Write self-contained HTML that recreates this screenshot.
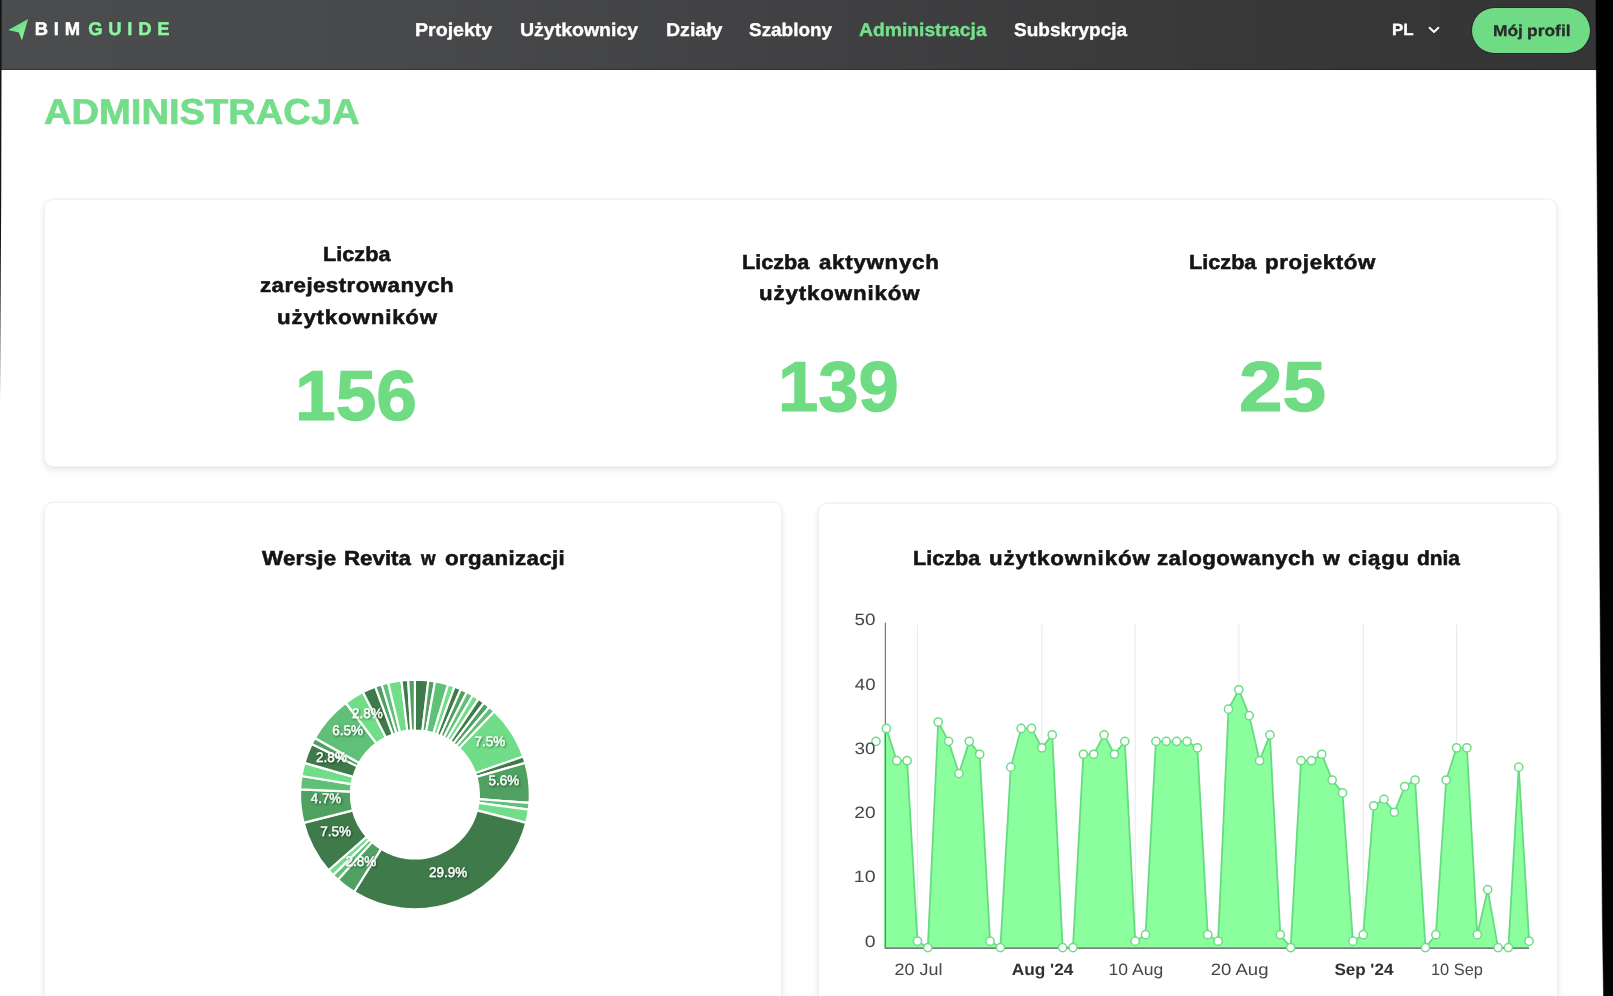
<!DOCTYPE html>
<html lang="pl"><head><meta charset="utf-8"><title>BIMGUIDE – Administracja</title>
<style>
*{box-sizing:border-box;margin:0;padding:0}
html,body{width:1613px;height:996px;overflow:hidden;background:#fff}
body{font-family:"Liberation Sans",sans-serif;font-weight:bold;position:relative;text-rendering:geometricPrecision}
#app{position:absolute;left:0;top:0;width:1613px;height:996px;overflow:hidden;filter:blur(0.5px)}
.t{position:absolute;white-space:pre;line-height:1;transform-origin:0 0;display:block}
#hbg{position:absolute;left:0;top:0;width:1613px;height:69.8px;box-shadow:inset 0 -1px 0 rgba(0,0,0,.28);background:linear-gradient(90deg,#4b4c4e 0%,#48494b 25%,#3f3f41 55%,#373737 80%,#353535 100%);filter:blur(0.5px)}
header{position:absolute;left:0;top:0;width:1613px;height:69.8px}
.btn{position:absolute;left:1472.2px;top:7.8px;width:117.8px;height:45.2px;border-radius:23px;background:#6fdc85;box-shadow:0 0 0 1px rgba(42,34,48,.85)}
.card{position:absolute;background:#fff;border:1px solid #f0f1f4;border-radius:9px;box-shadow:0 3px 7px -1px rgba(60,70,100,.16),0 0 3px rgba(60,70,100,.05)}
.card svg{position:absolute;left:-1px;top:-1px;overflow:visible}
.card .t{margin:-1px 0 0 -1px}
.bezel{position:absolute;left:0;top:0;width:1613px;height:996px;pointer-events:none}
</style></head><body><div id="hbg"></div><div id="app">
<header>
<svg width="40" height="60" style="position:absolute;left:0;top:0" viewBox="0 0 40 60"><defs><linearGradient id="lg" x1="0.2" y1="0" x2="0.8" y2="1"><stop offset="0" stop-color="#62d27c"/><stop offset="1" stop-color="#8df7a2"/></linearGradient></defs><path d="M28.1 19L8.2 29.9L18.9 32.5L21.9 40.5Z" fill="url(#lg)"/></svg>
<span class="t" style="left:34.79px;top:20.25px;font-size:18.40px;color:#fff;transform:scaleX(1.0000);letter-spacing:5.742px;-webkit-text-stroke:0.45px #fff;">BIM</span>
<span class="t" style="left:88.27px;top:20.25px;font-size:18.40px;color:#8cf5a0;transform:scaleX(1.0000);letter-spacing:5.738px;-webkit-text-stroke:0.45px #8cf5a0;">GUIDE</span>
<nav><span class="t" style="left:415.27px;top:21.25px;font-size:18.50px;color:#fff;transform:scaleX(1.0583);-webkit-text-stroke:0.35px #fff;">Projekty</span><span class="t" style="left:520.00px;top:21.25px;font-size:18.50px;color:#fff;transform:scaleX(1.0542);-webkit-text-stroke:0.35px #fff;">Użytkownicy</span><span class="t" style="left:665.67px;top:21.25px;font-size:18.50px;color:#fff;transform:scaleX(1.0560);-webkit-text-stroke:0.35px #fff;">Działy</span><span class="t" style="left:748.73px;top:21.25px;font-size:18.50px;color:#fff;transform:scaleX(1.0233);-webkit-text-stroke:0.35px #fff;">Szablony</span><span class="t" style="left:859.09px;top:21.25px;font-size:18.50px;color:#74e08b;transform:scaleX(1.0430);-webkit-text-stroke:0.35px #74e08b;">Administracja</span><span class="t" style="left:1014.03px;top:21.25px;font-size:18.50px;color:#fff;transform:scaleX(1.0287);-webkit-text-stroke:0.35px #fff;">Subskrypcja</span></nav>
<span class="t" style="left:1391.74px;top:22.25px;font-size:16.20px;color:#fff;transform:scaleX(1.0435);-webkit-text-stroke:0.35px #fff;">PL</span>
<svg width="14" height="10" viewBox="0 0 14 10" style="position:absolute;left:1426.6px;top:25.4px"><path d="M2.6 2.7L7 7L11.4 2.7" fill="none" stroke="#fff" stroke-width="1.9" stroke-linecap="round" stroke-linejoin="round"/></svg>
<div class="btn"><span class="t" style="left:20.39px;top:16.45px;font-size:15.80px;color:#2a2a2c;transform:scaleX(1.1015);word-spacing:-0.641px;-webkit-text-stroke:0.3px #2a2a2c;">Mój profil</span></div>
</header>
<h1><span class="t" style="left:44.20px;top:94.25px;font-size:36.00px;color:#74dd89;transform:scaleX(1.0592);-webkit-text-stroke:0.7px #74dd89;">ADMINISTRACJA</span></h1>
<section class="card" style="left:43.8px;top:199.0px;width:1513.2px;height:268.3px">
<span class="t" style="left:279.22px;top:46.25px;font-size:20.30px;color:#141414;transform:scaleX(1.0696);-webkit-text-stroke:0.55px #141414;">Liczba</span> <span class="t" style="left:216.48px;top:77.25px;font-size:20.30px;color:#141414;transform:scaleX(1.1000);letter-spacing:0.395px;-webkit-text-stroke:0.55px #141414;">zarejestrowanych</span> <span class="t" style="left:233.09px;top:109.25px;font-size:20.30px;color:#141414;transform:scaleX(1.1000);letter-spacing:0.738px;-webkit-text-stroke:0.55px #141414;">użytkowników</span> <span class="t" style="left:698.43px;top:54.25px;font-size:20.30px;color:#141414;transform:scaleX(1.0663);-webkit-text-stroke:0.55px #141414;">Liczba</span> <span class="t" style="left:774.82px;top:54.25px;font-size:20.30px;color:#141414;transform:scaleX(1.1000);letter-spacing:0.649px;-webkit-text-stroke:0.55px #141414;">aktywnych</span> <span class="t" style="left:715.69px;top:85.25px;font-size:20.30px;color:#141414;transform:scaleX(1.1000);letter-spacing:0.771px;-webkit-text-stroke:0.55px #141414;">użytkowników</span> <span class="t" style="left:1145.02px;top:54.25px;font-size:20.30px;color:#141414;transform:scaleX(1.0680);-webkit-text-stroke:0.55px #141414;">Liczba</span> <span class="t" style="left:1221.00px;top:54.25px;font-size:20.30px;color:#141414;transform:scaleX(1.1000);letter-spacing:0.571px;-webkit-text-stroke:0.55px #141414;">projektów</span> <span class="t num" style="left:251.10px;top:163.25px;font-size:70.80px;color:#6fdc84;transform:scaleX(1.0323);-webkit-text-stroke:1.2px #6fdc84;">156</span> <span class="t num" style="left:734.34px;top:154.25px;font-size:70.80px;color:#6fdc84;transform:scaleX(1.0230);-webkit-text-stroke:1.2px #6fdc84;">139</span> <span class="t num" style="left:1195.18px;top:154.25px;font-size:70.80px;color:#6fdc84;transform:scaleX(1.1073);-webkit-text-stroke:1.2px #6fdc84;">25</span>
</section>
<section class="card" style="left:44.0px;top:502.2px;width:738.4px;height:520px">
<h2><span class="t" style="left:218.30px;top:47.05px;font-size:20.30px;color:#141414;transform:scaleX(1.1000);letter-spacing:0.248px;-webkit-text-stroke:0.55px #141414;">Wersje</span> <span class="t" style="left:300.08px;top:47.05px;font-size:20.30px;color:#141414;transform:scaleX(1.0997);-webkit-text-stroke:0.55px #141414;">Revita</span> <span class="t" style="left:377.13px;top:47.05px;font-size:20.30px;color:#141414;transform:scaleX(0.9220);-webkit-text-stroke:0.55px #141414;">w</span> <span class="t" style="left:401.20px;top:47.05px;font-size:20.30px;color:#141414;transform:scaleX(1.1000);letter-spacing:0.287px;-webkit-text-stroke:0.55px #141414;">organizacji</span></h2>
<svg width="738.4" height="520">
<defs><filter id="ds" x="-20%" y="-20%" width="150%" height="150%"><feDropShadow dx="1" dy="1" stdDeviation="0.8" flood-color="#000" flood-opacity="0.5"/></filter></defs>
<g stroke="#fff" stroke-width="2.2" stroke-linejoin="round">
<path d="M370.90 177.60A114.9 114.9 0 0 1 384.36 178.39L378.40 228.94A64.0 64.0 0 0 0 370.90 228.50Z" fill="#3e7a4a"/>
<path d="M384.36 178.39A114.9 114.9 0 0 1 391.04 179.38L382.12 229.49A64.0 64.0 0 0 0 378.40 228.94Z" fill="#4fa061"/>
<path d="M391.04 179.38A114.9 114.9 0 0 1 404.15 182.52L389.42 231.24A64.0 64.0 0 0 0 382.12 229.49Z" fill="#61c077"/>
<path d="M404.15 182.52A114.9 114.9 0 0 1 410.55 184.66L392.99 232.43A64.0 64.0 0 0 0 389.42 231.24Z" fill="#71dd89"/>
<path d="M410.55 184.66A114.9 114.9 0 0 1 416.81 187.17L396.47 233.83A64.0 64.0 0 0 0 392.99 232.43Z" fill="#3e7a4a"/>
<path d="M416.81 187.17A114.9 114.9 0 0 1 422.91 190.05L399.87 235.43A64.0 64.0 0 0 0 396.47 233.83Z" fill="#4fa061"/>
<path d="M422.91 190.05A114.9 114.9 0 0 1 428.84 193.28L403.17 237.23A64.0 64.0 0 0 0 399.87 235.43Z" fill="#61c077"/>
<path d="M428.84 193.28A114.9 114.9 0 0 1 434.56 196.85L406.36 239.22A64.0 64.0 0 0 0 403.17 237.23Z" fill="#71dd89"/>
<path d="M434.56 196.85A114.9 114.9 0 0 1 440.06 200.75L409.42 241.39A64.0 64.0 0 0 0 406.36 239.22Z" fill="#3e7a4a"/>
<path d="M440.06 200.75A114.9 114.9 0 0 1 445.33 204.97L412.36 243.74A64.0 64.0 0 0 0 409.42 241.39Z" fill="#4fa061"/>
<path d="M445.33 204.97A114.9 114.9 0 0 1 450.34 209.48L415.15 246.26A64.0 64.0 0 0 0 412.36 243.74Z" fill="#61c077"/>
<path d="M450.34 209.48A114.9 114.9 0 0 1 479.31 254.44L431.29 271.30A64.0 64.0 0 0 0 415.15 246.26Z" fill="#71dd89"/>
<path d="M479.31 254.44A114.9 114.9 0 0 1 481.36 260.87L432.43 274.88A64.0 64.0 0 0 0 431.29 271.30Z" fill="#3e7a4a"/>
<path d="M481.36 260.87A114.9 114.9 0 0 1 485.49 300.93L434.73 297.19A64.0 64.0 0 0 0 432.43 274.88Z" fill="#4fa061"/>
<path d="M485.49 300.93A114.9 114.9 0 0 1 484.80 307.64L434.34 300.93A64.0 64.0 0 0 0 434.73 297.19Z" fill="#61c077"/>
<path d="M484.80 307.64A114.9 114.9 0 0 1 482.24 320.88L432.92 308.31A64.0 64.0 0 0 0 434.34 300.93Z" fill="#71dd89"/>
<path d="M482.24 320.88A114.9 114.9 0 0 1 310.08 389.98L337.02 346.80A64.0 64.0 0 0 0 432.92 308.31Z" fill="#3e7a4a"/>
<path d="M310.08 389.98A114.9 114.9 0 0 1 293.93 377.81L328.03 340.02A64.0 64.0 0 0 0 337.02 346.80Z" fill="#4fa061"/>
<path d="M293.93 377.81A114.9 114.9 0 0 1 289.06 373.15L325.31 337.42A64.0 64.0 0 0 0 328.03 340.02Z" fill="#61c077"/>
<path d="M289.06 373.15A114.9 114.9 0 0 1 284.47 368.21L322.76 334.67A64.0 64.0 0 0 0 325.31 337.42Z" fill="#71dd89"/>
<path d="M284.47 368.21A114.9 114.9 0 0 1 259.56 320.88L308.88 308.31A64.0 64.0 0 0 0 322.76 334.67Z" fill="#3e7a4a"/>
<path d="M259.56 320.88A114.9 114.9 0 0 1 256.11 287.44L306.96 289.68A64.0 64.0 0 0 0 308.88 308.31Z" fill="#4fa061"/>
<path d="M256.11 287.44A114.9 114.9 0 0 1 257.49 274.03L307.73 282.21A64.0 64.0 0 0 0 306.96 289.68Z" fill="#61c077"/>
<path d="M257.49 274.03A114.9 114.9 0 0 1 260.44 260.87L309.37 274.88A64.0 64.0 0 0 0 307.73 282.21Z" fill="#71dd89"/>
<path d="M260.44 260.87A114.9 114.9 0 0 1 267.69 242.00L313.41 264.37A64.0 64.0 0 0 0 309.37 274.88Z" fill="#3e7a4a"/>
<path d="M267.69 242.00A114.9 114.9 0 0 1 270.84 236.03L315.16 261.04A64.0 64.0 0 0 0 313.41 264.37Z" fill="#4fa061"/>
<path d="M270.84 236.03A114.9 114.9 0 0 1 301.74 200.75L332.38 241.39A64.0 64.0 0 0 0 315.16 261.04Z" fill="#61c077"/>
<path d="M301.74 200.75A114.9 114.9 0 0 1 318.89 190.05L341.93 235.43A64.0 64.0 0 0 0 332.38 241.39Z" fill="#71dd89"/>
<path d="M318.89 190.05A114.9 114.9 0 0 1 331.25 184.66L348.81 232.43A64.0 64.0 0 0 0 341.93 235.43Z" fill="#3e7a4a"/>
<path d="M331.25 184.66A114.9 114.9 0 0 1 337.65 182.52L352.38 231.24A64.0 64.0 0 0 0 348.81 232.43Z" fill="#4fa061"/>
<path d="M337.65 182.52A114.9 114.9 0 0 1 344.16 180.76L356.01 230.26A64.0 64.0 0 0 0 352.38 231.24Z" fill="#61c077"/>
<path d="M344.16 180.76A114.9 114.9 0 0 1 357.44 178.39L363.40 228.94A64.0 64.0 0 0 0 356.01 230.26Z" fill="#71dd89"/>
<path d="M357.44 178.39A114.9 114.9 0 0 1 364.16 177.80L367.14 228.61A64.0 64.0 0 0 0 363.40 228.94Z" fill="#3e7a4a"/>
<path d="M364.16 177.80A114.9 114.9 0 0 1 370.90 177.60L370.90 228.50A64.0 64.0 0 0 0 367.14 228.61Z" fill="#4fa061"/>
</g><g filter="url(#ds)" stroke="#fff" stroke-width="0.35">
<text transform="translate(430.59,243.80) scale(0.9713,1)" font-size="13.90" font-weight="normal" fill="#fff">7.5%</text>
<text transform="translate(444.54,282.80) scale(0.9664,1)" font-size="13.90" font-weight="normal" fill="#fff">5.6%</text>
<text transform="translate(385.09,374.80) scale(0.9655,1)" font-size="13.90" font-weight="normal" fill="#fff">29.9%</text>
<text transform="translate(301.58,363.80) scale(0.9709,1)" font-size="13.90" font-weight="normal" fill="#fff">2.8%</text>
<text transform="translate(276.25,333.80) scale(0.9713,1)" font-size="13.90" font-weight="normal" fill="#fff">7.5%</text>
<text transform="translate(266.82,300.80) scale(0.9589,1)" font-size="13.90" font-weight="normal" fill="#fff">4.7%</text>
<text transform="translate(271.93,259.80) scale(0.9709,1)" font-size="13.90" font-weight="normal" fill="#fff">2.8%</text>
<text transform="translate(288.13,232.80) scale(0.9711,1)" font-size="13.90" font-weight="normal" fill="#fff">6.5%</text>
<text transform="translate(308.07,215.80) scale(0.9709,1)" font-size="13.90" font-weight="normal" fill="#fff">2.8%</text>
</g></svg></section>
<section class="card" style="left:818.0px;top:502.6px;width:740.0px;height:520px">
<h2><span class="t" style="left:95.23px;top:46.65px;font-size:20.30px;color:#141414;transform:scaleX(1.0663);-webkit-text-stroke:0.55px #141414;">Liczba</span> <span class="t" style="left:170.79px;top:46.65px;font-size:20.30px;color:#141414;transform:scaleX(1.1000);letter-spacing:0.788px;-webkit-text-stroke:0.55px #141414;">użytkowników</span> <span class="t" style="left:339.28px;top:46.65px;font-size:20.30px;color:#141414;transform:scaleX(1.1000);letter-spacing:0.423px;-webkit-text-stroke:0.55px #141414;">zalogowanych</span> <span class="t" style="left:504.94px;top:46.65px;font-size:20.30px;color:#141414;transform:scaleX(1.0668);-webkit-text-stroke:0.55px #141414;">w</span> <span class="t" style="left:529.80px;top:46.65px;font-size:20.30px;color:#141414;transform:scaleX(1.1000);letter-spacing:0.675px;-webkit-text-stroke:0.55px #141414;">ciągu</span> <span class="t" style="left:598.72px;top:46.65px;font-size:20.30px;color:#141414;transform:scaleX(1.0298);-webkit-text-stroke:0.55px #141414;">dnia</span></h2>
<svg width="740.0" height="520">
<defs><clipPath id="cp"><rect x="66.00" y="97.40" width="700" height="347.40"/></clipPath></defs>
<line x1="99.47" y1="121.40" x2="99.47" y2="444.60" stroke="#e9eaec" stroke-width="1.1"/>
<line x1="223.87" y1="121.40" x2="223.87" y2="444.60" stroke="#e9eaec" stroke-width="1.1"/>
<line x1="317.17" y1="121.40" x2="317.17" y2="444.60" stroke="#e9eaec" stroke-width="1.1"/>
<line x1="420.85" y1="121.40" x2="420.85" y2="444.60" stroke="#e9eaec" stroke-width="1.1"/>
<line x1="545.25" y1="121.40" x2="545.25" y2="444.60" stroke="#e9eaec" stroke-width="1.1"/>
<line x1="638.55" y1="121.40" x2="638.55" y2="444.60" stroke="#e9eaec" stroke-width="1.1"/>
<g clip-path="url(#cp)"><path d="M58.00 444.60L58.00 238.36L68.37 225.47L78.73 257.70L89.10 257.70L99.47 438.15L109.84 444.60L120.20 219.02L130.57 238.36L140.94 270.59L151.30 238.36L161.67 251.25L172.04 438.15L182.40 444.60L192.77 264.14L203.14 225.47L213.51 225.47L223.87 244.80L234.24 231.92L244.61 444.60L254.97 444.60L265.34 251.25L275.71 251.25L286.07 231.92L296.44 251.25L306.81 238.36L317.17 438.15L327.54 431.71L337.91 238.36L348.28 238.36L358.64 238.36L369.01 238.36L379.38 244.80L389.74 431.71L400.11 438.15L410.48 206.13L420.85 186.80L431.21 212.58L441.58 257.70L451.95 231.92L462.31 431.71L472.68 444.60L483.05 257.70L493.41 257.70L503.78 251.25L514.15 277.03L524.52 289.92L534.88 438.15L545.25 431.71L555.62 302.81L565.98 296.37L576.35 309.25L586.72 283.48L597.08 277.03L607.45 444.60L617.82 431.71L628.18 277.03L638.55 244.80L648.92 244.80L659.29 431.71L669.65 386.60L680.02 444.60L690.39 444.60L700.75 264.14L711.12 438.15L711.12 444.60Z" fill="#8bfe9e"/><path d="M58.00 238.36L68.37 225.47L78.73 257.70L89.10 257.70L99.47 438.15L109.84 444.60L120.20 219.02L130.57 238.36L140.94 270.59L151.30 238.36L161.67 251.25L172.04 438.15L182.40 444.60L192.77 264.14L203.14 225.47L213.51 225.47L223.87 244.80L234.24 231.92L244.61 444.60L254.97 444.60L265.34 251.25L275.71 251.25L286.07 231.92L296.44 251.25L306.81 238.36L317.17 438.15L327.54 431.71L337.91 238.36L348.28 238.36L358.64 238.36L369.01 238.36L379.38 244.80L389.74 431.71L400.11 438.15L410.48 206.13L420.85 186.80L431.21 212.58L441.58 257.70L451.95 231.92L462.31 431.71L472.68 444.60L483.05 257.70L493.41 257.70L503.78 251.25L514.15 277.03L524.52 289.92L534.88 438.15L545.25 431.71L555.62 302.81L565.98 296.37L576.35 309.25L586.72 283.48L597.08 277.03L607.45 444.60L617.82 431.71L628.18 277.03L638.55 244.80L648.92 244.80L659.29 431.71L669.65 386.60L680.02 444.60L690.39 444.60L700.75 264.14L711.12 438.15" fill="none" stroke="#66db80" stroke-width="1.8" stroke-linejoin="round"/></g>
<line x1="67.40" y1="119.70" x2="67.40" y2="445.50" stroke="#76787b" stroke-width="1.25"/>
<line x1="66.70" y1="445.10" x2="711.12" y2="445.10" stroke="#7a7c80" stroke-width="1.6"/>
<g fill="#fff" stroke="#6ddc85" stroke-width="1.5">
<circle cx="58.00" cy="238.36" r="4.1"/>
<circle cx="68.37" cy="225.47" r="4.1"/>
<circle cx="78.73" cy="257.70" r="4.1"/>
<circle cx="89.10" cy="257.70" r="4.1"/>
<circle cx="99.47" cy="438.15" r="4.1"/>
<circle cx="109.84" cy="444.60" r="4.1"/>
<circle cx="120.20" cy="219.02" r="4.1"/>
<circle cx="130.57" cy="238.36" r="4.1"/>
<circle cx="140.94" cy="270.59" r="4.1"/>
<circle cx="151.30" cy="238.36" r="4.1"/>
<circle cx="161.67" cy="251.25" r="4.1"/>
<circle cx="172.04" cy="438.15" r="4.1"/>
<circle cx="182.40" cy="444.60" r="4.1"/>
<circle cx="192.77" cy="264.14" r="4.1"/>
<circle cx="203.14" cy="225.47" r="4.1"/>
<circle cx="213.51" cy="225.47" r="4.1"/>
<circle cx="223.87" cy="244.80" r="4.1"/>
<circle cx="234.24" cy="231.92" r="4.1"/>
<circle cx="244.61" cy="444.60" r="4.1"/>
<circle cx="254.97" cy="444.60" r="4.1"/>
<circle cx="265.34" cy="251.25" r="4.1"/>
<circle cx="275.71" cy="251.25" r="4.1"/>
<circle cx="286.07" cy="231.92" r="4.1"/>
<circle cx="296.44" cy="251.25" r="4.1"/>
<circle cx="306.81" cy="238.36" r="4.1"/>
<circle cx="317.17" cy="438.15" r="4.1"/>
<circle cx="327.54" cy="431.71" r="4.1"/>
<circle cx="337.91" cy="238.36" r="4.1"/>
<circle cx="348.28" cy="238.36" r="4.1"/>
<circle cx="358.64" cy="238.36" r="4.1"/>
<circle cx="369.01" cy="238.36" r="4.1"/>
<circle cx="379.38" cy="244.80" r="4.1"/>
<circle cx="389.74" cy="431.71" r="4.1"/>
<circle cx="400.11" cy="438.15" r="4.1"/>
<circle cx="410.48" cy="206.13" r="4.1"/>
<circle cx="420.85" cy="186.80" r="4.1"/>
<circle cx="431.21" cy="212.58" r="4.1"/>
<circle cx="441.58" cy="257.70" r="4.1"/>
<circle cx="451.95" cy="231.92" r="4.1"/>
<circle cx="462.31" cy="431.71" r="4.1"/>
<circle cx="472.68" cy="444.60" r="4.1"/>
<circle cx="483.05" cy="257.70" r="4.1"/>
<circle cx="493.41" cy="257.70" r="4.1"/>
<circle cx="503.78" cy="251.25" r="4.1"/>
<circle cx="514.15" cy="277.03" r="4.1"/>
<circle cx="524.52" cy="289.92" r="4.1"/>
<circle cx="534.88" cy="438.15" r="4.1"/>
<circle cx="545.25" cy="431.71" r="4.1"/>
<circle cx="555.62" cy="302.81" r="4.1"/>
<circle cx="565.98" cy="296.37" r="4.1"/>
<circle cx="576.35" cy="309.25" r="4.1"/>
<circle cx="586.72" cy="283.48" r="4.1"/>
<circle cx="597.08" cy="277.03" r="4.1"/>
<circle cx="607.45" cy="444.60" r="4.1"/>
<circle cx="617.82" cy="431.71" r="4.1"/>
<circle cx="628.18" cy="277.03" r="4.1"/>
<circle cx="638.55" cy="244.80" r="4.1"/>
<circle cx="648.92" cy="244.80" r="4.1"/>
<circle cx="659.29" cy="431.71" r="4.1"/>
<circle cx="669.65" cy="386.60" r="4.1"/>
<circle cx="680.02" cy="444.60" r="4.1"/>
<circle cx="690.39" cy="444.60" r="4.1"/>
<circle cx="700.75" cy="264.14" r="4.1"/>
<circle cx="711.12" cy="438.15" r="4.1"/>
</g>
<text transform="translate(36.54,122.40) scale(1.1508,1)" font-size="16.40" font-weight="normal" fill="#45474a">50</text>
<text transform="translate(36.87,187.40) scale(1.1321,1)" font-size="16.40" font-weight="normal" fill="#45474a">40</text>
<text transform="translate(36.58,251.40) scale(1.1486,1)" font-size="16.40" font-weight="normal" fill="#45474a">30</text>
<text transform="translate(36.34,315.40) scale(1.1623,1)" font-size="16.40" font-weight="normal" fill="#45474a">20</text>
<text transform="translate(35.81,379.40) scale(1.1925,1)" font-size="16.40" font-weight="normal" fill="#45474a">10</text>
<text transform="translate(46.74,444.40) scale(1.1863,1)" font-size="16.40" font-weight="normal" fill="#45474a">0</text>
<text transform="translate(76.60,472.40) scale(1.0946,1)" font-size="16.40" font-weight="normal" fill="#45474a">20 Jul</text>
<text transform="translate(193.67,472.40) scale(1.0537,1)" font-size="16.40" font-weight="bold" fill="#2e3033">Aug '24</text>
<text transform="translate(290.46,472.40) scale(1.0724,1)" font-size="16.40" font-weight="normal" fill="#45474a">10 Aug</text>
<text transform="translate(392.67,472.40) scale(1.1323,1)" font-size="16.40" font-weight="normal" fill="#45474a">20 Aug</text>
<text transform="translate(516.41,472.40) scale(1.0389,1)" font-size="16.40" font-weight="bold" fill="#2e3033">Sep '24</text>
<text transform="translate(612.95,472.40) scale(0.9992,1)" font-size="16.40" font-weight="normal" fill="#45474a">10 Sep</text>
</svg></section>
<svg class="bezel" viewBox="0 0 1613 996"><path d="M1595.9 0L1596.3 70L1598.8 420L1599.9 580L1602.3 916L1603.5 996L1613 996L1613 0Z" fill="#020202" stroke="#020202" stroke-width="1" stroke-opacity=".5"/><path d="M0 0L1.7 0L1.5 70L1.2 200L0 400Z" fill="#141414"/></svg>
</div></body></html>
